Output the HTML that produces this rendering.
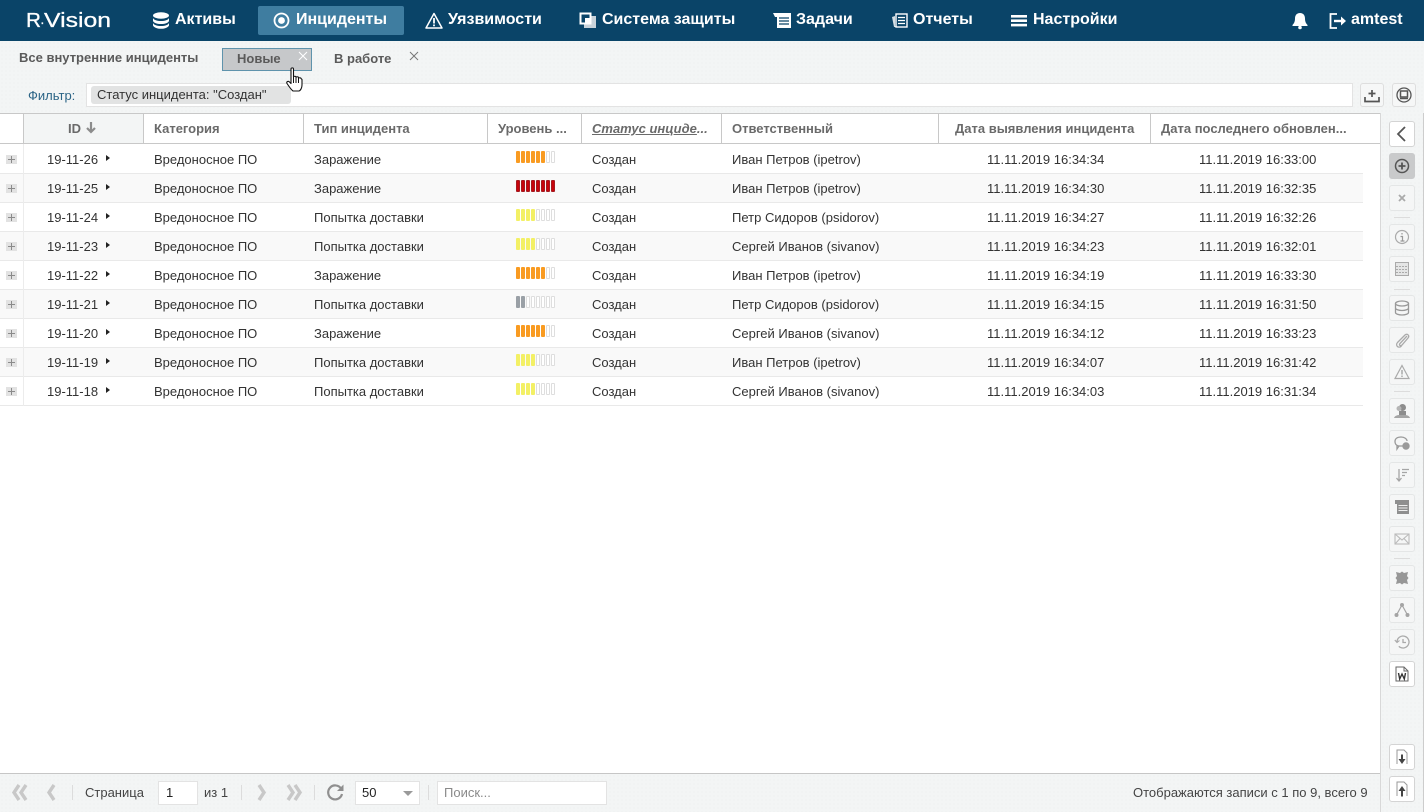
<!DOCTYPE html>
<html lang="ru"><head><meta charset="utf-8"><title>Инциденты</title>
<style>
*{box-sizing:border-box}
html,body{margin:0;padding:0;width:1424px;height:812px;overflow:hidden;background:#fff;font-family:"Liberation Sans",Arial,sans-serif;font-size:13px;color:#333}
.a{position:absolute;white-space:nowrap}
svg{position:absolute;overflow:visible}
#nav{position:absolute;left:0;top:0;width:1424px;height:41px;background:#0a4468}
#nav .t{position:absolute;top:0;line-height:40px;font-weight:bold;font-size:16px;color:#fff;white-space:nowrap}
#sub{position:absolute;left:0;top:41px;width:1424px;height:72px;background-color:#f3f5f5;background-image:radial-gradient(#eceeee 0.6px,transparent 0.7px);background-size:4px 4px}
.tab{position:absolute;font-weight:bold;font-size:13px;color:#5a5a5a;line-height:16px;white-space:nowrap}
.th{position:absolute;top:114px;height:29px;line-height:29px;font-weight:bold;font-size:13px;color:#6a6a6a;white-space:nowrap}
.vl{position:absolute;top:114px;height:29px;width:1px;background:#c8c8c8}
.r{position:absolute;left:0;width:1363px;height:29px;border-bottom:1px solid #e9e9e9;line-height:30px;white-space:nowrap}
.r.e{background:#f9f9f9}
.r span{position:absolute;top:0}
.r .x{left:6px;top:10px;width:11px;height:9px;background:#e2e2e2;color:#888}
.r .x:before{content:"";position:absolute;left:2px;top:4px;width:7px;height:1px;background:#8b8b8b}
.r .x:after{content:"";position:absolute;left:5px;top:1px;width:1px;height:7px;background:#8b8b8b}
.r .ar{left:106px;top:10px;width:0;height:0;border-left:4px solid #222;border-top:3px solid transparent;border-bottom:3px solid transparent}
.c1{left:47px}.c2{left:154px}.c3{left:314px}.c5{left:592px}.c6{left:732px}.c7{left:987px}.c8{left:1199px}
.r .lv{left:516px;top:6px;height:12px;width:40px;display:flex;gap:1px}
.lv i{display:block;flex:none;width:4px;height:12px;border-radius:1px;background:#fff;border:1px solid #dedede}
.lv i.o{background:#f99b21;border-color:#f99b21}
.lv i.d{background:#c8040c;border-color:#a51a20}
.lv i.y{background:#f3f065;border-color:#f3f065}
.lv i.g{background:#9aa0a6;border-color:#9aa0a6}
#side{position:absolute;left:1380px;top:113px;width:44px;height:699px;background-color:#f3f5f5;background-image:radial-gradient(#eceeee 0.6px,transparent 0.7px);background-size:4px 4px;border-left:1px solid #d8d8d8;border-right:1px solid #cdcdcd}
.b{position:absolute;left:1389px;width:26px;height:26px;border:1px solid #e4e6e6;border-radius:3px;background:#f5f6f6}
.b.w{background:#fff;border-color:#d4d4d4}
.b.on{background:#c9cacb;border-color:#c9cacb}
.b svg{left:4px;top:4px;width:16px;height:16px}
.dv{position:absolute;left:1394px;width:16px;height:1px;background:#dcdcdc}
#foot{position:absolute;left:0;top:773px;width:1380px;height:39px;background-color:#f3f5f5;background-image:radial-gradient(#eceeee 0.6px,transparent 0.7px);background-size:4px 4px;border-top:1px solid #c6c6c6}
.sp{position:absolute;top:785px;width:1px;height:15px;background:#dcdcdc}
.inp{position:absolute;top:781px;height:24px;background:#fff;border:1px solid #e3e3e3;line-height:22px;white-space:nowrap}
.ft{position:absolute;top:785px;line-height:15px;color:#444;white-space:nowrap}
</style></head><body>
<div id="nav">
<svg style="left:26px;top:10px" width="86" height="20" font-family="Liberation Sans" font-size="20" fill="#fff" stroke="#fff" stroke-width=".3"><text x="0" y="17" textLength="15" lengthAdjust="spacingAndGlyphs">R</text><text x="14" y="17" font-size="14">·</text><text x="18" y="17" textLength="67" lengthAdjust="spacingAndGlyphs">Vision</text></svg>
<svg style="left:152px;top:12px" width="18" height="17" fill="#fff"><ellipse cx="9" cy="3.500" rx="8" ry="3.200"/><path d="M1 6c1 2 4 3 8 3s7-1 8-3v3c-1 2-4 3-8 3S2 11 1 9z"/><path d="M1 11c1 2 4 3 8 3s7-1 8-3v2.500c-1 2-4 3.300-8 3.300S2 15.500 1 13.500z"/></svg>
<div class="t" style="left:175px">Активы</div>
<div style="position:absolute;left:258px;top:6px;width:146px;height:29px;background:#3f7da0;border-radius:2px"></div>
<svg style="left:273px;top:12px" width="17" height="17"><circle cx="8.500" cy="8.500" r="7" fill="none" stroke="#fff" stroke-width="1.800"/><circle cx="8.500" cy="8.500" r="3.400" fill="#fff"/></svg>
<div class="t" style="left:296px">Инциденты</div>
<svg style="left:425px;top:12px" width="18" height="17"><path d="M9 1.500 17 16H1z" fill="none" stroke="#fff" stroke-width="1.500" stroke-linejoin="round"/><path d="M9 6v5.500M9 12.500v1.800" stroke="#fff" stroke-width="1.800"/></svg>
<div class="t" style="left:448px">Уязвимости</div>
<svg style="left:579px;top:12px" width="18" height="17"><rect x="5" y="4" width="12" height="12" fill="#c9d3da"/><rect x="1.500" y="1.500" width="10" height="10" fill="#0a4468" stroke="#fff" stroke-width="2"/><rect x="6" y="6" width="5" height="5" fill="#fff"/></svg>
<div class="t" style="left:602px">Система защиты</div>
<svg style="left:773px;top:12px" width="18" height="17"><path d="M0 1h18v15H4V5H2z" fill="#fff"/><path d="M6 6h10M6 9h10M6 12h10" stroke="#0a4468" stroke-width="1.200"/></svg>
<div class="t" style="left:796px">Задачи</div>
<svg style="left:891px;top:13px" width="17" height="15"><path d="M1 4l3-1v10l3 1H3z" fill="#d6dfe4"/><rect x="5" y="1" width="11" height="13" fill="none" stroke="#fff" stroke-width="1.400"/><path d="M7 4.500h7M7 7.500h7M7 10.500h7" stroke="#fff" stroke-width="1.300"/></svg>
<div class="t" style="left:913px">Отчеты</div>
<svg style="left:1011px;top:15px" width="16" height="12" fill="#fff"><rect width="16" height="2.600"/><rect y="4.400" width="16" height="2.600"/><rect y="8.800" width="16" height="2.600"/></svg>
<div class="t" style="left:1033px">Настройки</div>
<svg style="left:1291px;top:12px" width="18" height="17" fill="#fff"><path d="M9 1c3.500 0 5 2.500 5 5.500 0 3 1 5 2.500 6.500v1h-15v-1C3 11.500 4 9.500 4 6.500 4 3.500 5.500 1 9 1z"/><circle cx="9" cy="15.500" r="1.800"/></svg>
<svg style="left:1329px;top:12px" width="18" height="17" fill="none" stroke="#fff" stroke-width="1.800"><path d="M8 2H1.500v14H8"/><path d="M5 9h8" stroke-width="2.400"/><path d="M12 4.500 17 9l-5 4.500z" fill="#fff" stroke="none"/></svg>
<div class="t" style="left:1351px">amtest</div>
</div>

<div id="sub"></div>
<div class="tab" style="left:19px;top:50px">Все внутренние инциденты</div>
<div style="position:absolute;left:222px;top:48px;width:90px;height:23px;background:#c6c8ca;border:1px solid #5f93ac"></div>
<div class="tab" style="left:237px;top:51px">Новые</div>
<svg style="left:298px;top:51px" width="10" height="10" stroke="#fff" stroke-width="1"><path d="M1 1l8 8M9 1 1 9"/></svg>
<div class="tab" style="left:334px;top:51px">В работе</div>
<svg style="left:409px;top:51px" width="10" height="10" stroke="#777" stroke-width="1"><path d="M1 1l8 8M9 1 1 9"/></svg>

<div class="a" style="left:28px;top:88px;line-height:15px;color:#2b6486">Фильтр:</div>
<div style="position:absolute;left:86px;top:83px;width:1267px;height:24px;background:#fff;border:1px solid #e3e3e3"></div>
<div class="a" style="left:91px;top:86px;width:200px;height:18px;background:#e2e3e3;border-radius:3px;line-height:17px;padding-left:6px;color:#333">Статус инцидента: "Создан"</div>
<div style="position:absolute;left:1360px;top:83px;width:24px;height:24px;border:1px solid #dedede;border-radius:3px;background:#f6f7f7"></div>
<svg style="left:1364px;top:89px" width="16" height="14" fill="none" stroke="#555" stroke-width="1.700"><path d="M8 1v7M4.500 4.500h7"/><path d="M1 8v4.500h14V8"/></svg>
<div style="position:absolute;left:1392px;top:83px;width:24px;height:24px;border:1px solid #dedede;border-radius:3px;background:#f6f7f7"></div>
<svg style="left:1396px;top:87px" width="16" height="16" fill="none" stroke="#555"><circle cx="8" cy="8" r="7" stroke-width="1.300"/><rect x="4.500" y="4" width="7" height="6" stroke-width="1.500"/><path d="M4 11.500h8" stroke-width="1.500"/></svg>

<!-- table header -->
<div style="position:absolute;left:0;top:113px;width:1380px;height:31px;background:#fff;border-top:1px solid #c8c8c8;border-bottom:1px solid #c8c8c8"></div>
<div style="position:absolute;left:24px;top:114px;width:119px;height:29px;background:#f3f5f5"></div>
<div class="vl" style="left:23px"></div><div class="vl" style="left:143px"></div><div class="vl" style="left:303px"></div><div class="vl" style="left:487px"></div><div class="vl" style="left:581px"></div><div class="vl" style="left:721px"></div><div class="vl" style="left:938px"></div><div class="vl" style="left:1150px"></div>
<div class="th" style="left:68px">ID</div>
<svg style="left:86px;top:122px" width="10" height="12" fill="none" stroke="#8c8c8c" stroke-width="2.200"><path d="M5 0v10M1 6l4 4 4-4"/></svg>
<div class="th" style="left:154px">Категория</div>
<div class="th" style="left:314px">Тип инцидента</div>
<div class="th" style="left:498px">Уровень ...</div>
<div class="th" style="left:592px;font-style:italic"><u>Статус инциде</u>...</div>
<div class="th" style="left:732px">Ответственный</div>
<div class="th" style="left:955px">Дата выявления инцидента</div>
<div class="th" style="left:1161px">Дата последнего обновлен...</div>

<!-- rows -->
<div class="r" style="top:145px"><span class="x"></span><span class="c1">19-11-26</span><span class="ar"></span><span class="c2">Вредоносное ПО</span><span class="c3">Заражение</span><span class="lv"><i class="o"></i><i class="o"></i><i class="o"></i><i class="o"></i><i class="o"></i><i class="o"></i><i></i><i></i></span><span class="c5">Создан</span><span class="c6">Иван Петров (ipetrov)</span><span class="c7">11.11.2019 16:34:34</span><span class="c8">11.11.2019 16:33:00</span></div>
<div class="r e" style="top:174px"><span class="x"></span><span class="c1">19-11-25</span><span class="ar"></span><span class="c2">Вредоносное ПО</span><span class="c3">Заражение</span><span class="lv"><i class="d"></i><i class="d"></i><i class="d"></i><i class="d"></i><i class="d"></i><i class="d"></i><i class="d"></i><i class="d"></i></span><span class="c5">Создан</span><span class="c6">Иван Петров (ipetrov)</span><span class="c7">11.11.2019 16:34:30</span><span class="c8">11.11.2019 16:32:35</span></div>
<div class="r" style="top:203px"><span class="x"></span><span class="c1">19-11-24</span><span class="ar"></span><span class="c2">Вредоносное ПО</span><span class="c3">Попытка доставки</span><span class="lv"><i class="y"></i><i class="y"></i><i class="y"></i><i class="y"></i><i></i><i></i><i></i><i></i></span><span class="c5">Создан</span><span class="c6">Петр Сидоров (psidorov)</span><span class="c7">11.11.2019 16:34:27</span><span class="c8">11.11.2019 16:32:26</span></div>
<div class="r e" style="top:232px"><span class="x"></span><span class="c1">19-11-23</span><span class="ar"></span><span class="c2">Вредоносное ПО</span><span class="c3">Попытка доставки</span><span class="lv"><i class="y"></i><i class="y"></i><i class="y"></i><i class="y"></i><i></i><i></i><i></i><i></i></span><span class="c5">Создан</span><span class="c6">Сергей Иванов (sivanov)</span><span class="c7">11.11.2019 16:34:23</span><span class="c8">11.11.2019 16:32:01</span></div>
<div class="r" style="top:261px"><span class="x"></span><span class="c1">19-11-22</span><span class="ar"></span><span class="c2">Вредоносное ПО</span><span class="c3">Заражение</span><span class="lv"><i class="o"></i><i class="o"></i><i class="o"></i><i class="o"></i><i class="o"></i><i class="o"></i><i></i><i></i></span><span class="c5">Создан</span><span class="c6">Иван Петров (ipetrov)</span><span class="c7">11.11.2019 16:34:19</span><span class="c8">11.11.2019 16:33:30</span></div>
<div class="r e" style="top:290px"><span class="x"></span><span class="c1">19-11-21</span><span class="ar"></span><span class="c2">Вредоносное ПО</span><span class="c3">Попытка доставки</span><span class="lv"><i class="g"></i><i class="g"></i><i></i><i></i><i></i><i></i><i></i><i></i></span><span class="c5">Создан</span><span class="c6">Петр Сидоров (psidorov)</span><span class="c7">11.11.2019 16:34:15</span><span class="c8">11.11.2019 16:31:50</span></div>
<div class="r" style="top:319px"><span class="x"></span><span class="c1">19-11-20</span><span class="ar"></span><span class="c2">Вредоносное ПО</span><span class="c3">Заражение</span><span class="lv"><i class="o"></i><i class="o"></i><i class="o"></i><i class="o"></i><i class="o"></i><i class="o"></i><i></i><i></i></span><span class="c5">Создан</span><span class="c6">Сергей Иванов (sivanov)</span><span class="c7">11.11.2019 16:34:12</span><span class="c8">11.11.2019 16:33:23</span></div>
<div class="r e" style="top:348px"><span class="x"></span><span class="c1">19-11-19</span><span class="ar"></span><span class="c2">Вредоносное ПО</span><span class="c3">Попытка доставки</span><span class="lv"><i class="y"></i><i class="y"></i><i class="y"></i><i class="y"></i><i></i><i></i><i></i><i></i></span><span class="c5">Создан</span><span class="c6">Иван Петров (ipetrov)</span><span class="c7">11.11.2019 16:34:07</span><span class="c8">11.11.2019 16:31:42</span></div>
<div class="r" style="top:377px"><span class="x"></span><span class="c1">19-11-18</span><span class="ar"></span><span class="c2">Вредоносное ПО</span><span class="c3">Попытка доставки</span><span class="lv"><i class="y"></i><i class="y"></i><i class="y"></i><i class="y"></i><i></i><i></i><i></i><i></i></span><span class="c5">Создан</span><span class="c6">Сергей Иванов (sivanov)</span><span class="c7">11.11.2019 16:34:03</span><span class="c8">11.11.2019 16:31:34</span></div>
<div style="position:absolute;left:23px;top:144px;width:1px;height:262px;background:#ececec"></div>

<!-- side toolbar -->
<div id="side"></div>
<div class="b w" style="top:121px"><svg viewBox="0 0 16 16" fill="none" stroke="#555" stroke-width="1.800"><path d="M11 1 4 8l7 7"/></svg></div>
<div class="b on" style="top:153px"><svg viewBox="0 0 16 16" fill="none" stroke="#555" stroke-width="1.500"><circle cx="8" cy="8" r="6.500"/><path d="M8 4.500v7M4.500 8h7" stroke-width="1.800"/></svg></div>
<div class="b" style="top:185px"><svg viewBox="0 0 16 16" fill="none" stroke="#aaa" stroke-width="1.800"><path d="M5 5l6 6M11 5l-6 6"/></svg></div>
<div class="dv" style="top:217px"></div>
<div class="b" style="top:224px"><svg viewBox="0 0 16 16" fill="none" stroke="#aaa" stroke-width="1.200"><circle cx="8" cy="8" r="6.500"/><path d="M8 4v1.500M6.500 7.500H8.500V12M6.500 12h4" stroke="#999"/></svg></div>
<div class="b" style="top:256px"><svg viewBox="0 0 16 16" fill="none" stroke="#aaa" stroke-width="1"><rect x="1.500" y="1.500" width="13" height="13" fill="#e4e5e5"/><path d="M2 5.500h12M2 8.500h12M2 11.500h12" stroke-dasharray="2 1"/></svg></div>
<div class="dv" style="top:289px"></div>
<div class="b" style="top:295px"><svg viewBox="0 0 16 16" fill="none" stroke="#999" stroke-width="1.300"><ellipse cx="8" cy="3.500" rx="6.500" ry="2.500"/><path d="M1.500 3.500v9c0 1.400 3 2.500 6.500 2.500s6.500-1.100 6.500-2.500v-9M1.500 8c0 1.400 3 2.500 6.500 2.500s6.500-1.100 6.500-2.500"/></svg></div>
<div class="b" style="top:327px"><svg viewBox="0 0 16 16" fill="none" stroke="#aaa" stroke-width="1.300"><path d="M13 4 6 11.500c-1.500 1.500 .5 3 2 1.500l6-7c2-2.500-1-5-3-3L3.500 10.500c-2.500 3 1 6.500 4 3.500"/></svg></div>
<div class="b" style="top:359px"><svg viewBox="0 0 16 16" fill="none" stroke="#aaa" stroke-width="1.200"><path d="M8 1.500 15 14.500H1z"/><path d="M8 6v4.500M8 11.500v1.500" stroke-width="1.500"/></svg></div>
<div class="dv" style="top:391px"></div>
<div class="b" style="top:398px"><svg viewBox="0 0 16 16" fill="#8d8d8d"><circle cx="8.500" cy="4.500" r="3.500"/><path d="M5 8h7v4H5z"/><path d="M0 15c.5-2 3-3 5-3h6c2 0 4.500 1 5 3z" fill="#a5a5a5"/><circle cx="5" cy="5.500" r="2.500" fill="#b5b5b5"/></svg></div>
<div class="b" style="top:430px"><svg viewBox="0 0 16 16" fill="none" stroke="#999" stroke-width="1.300"><path d="M9 11H6c-3 0-5-1.500-5-4.500S3.500 2 7 2s6 2 6 4M5 11l-2 3v-3.500"/><circle cx="12" cy="11" r="3.700" fill="#9a9a9a" stroke="none"/></svg></div>
<div class="b" style="top:462px"><svg viewBox="0 0 16 16" fill="none" stroke="#a5a5a5" stroke-width="1.300"><path d="M5 2v12M2.500 11 5 14l2.500-3M8 2.500h7M8 5.500h5M8 8.500h3"/></svg></div>
<div class="b" style="top:494px"><svg viewBox="0 0 16 16" fill="#8f8f8f"><path d="M1 1h14v14H3V5H1z"/><path d="M4.500 6.500h9M4.500 9h9M4.500 11.500h9" stroke="#eee" stroke-width="1"/></svg></div>
<div class="b" style="top:526px"><svg viewBox="0 0 16 16" fill="none" stroke="#bbb" stroke-width="1.100"><rect x="1" y="3" width="14" height="10"/><path d="M1 3l7 6 7-6M1 13l5-5.500M15 13l-5-5.500"/></svg></div>
<div class="dv" style="top:558px"></div>
<div class="b" style="top:565px"><svg viewBox="0 0 16 16" fill="#979797"><path d="M2 2l4 1 2-1.500L10 3l4-1-1 4 1.500 2L13 10l1 4-4-1-2 1.500L6 13l-4 1 1-4L1.500 8 3 6z"/></svg></div>
<div class="b" style="top:597px"><svg viewBox="0 0 16 16" fill="#a5a5a5" stroke="#a5a5a5"><path d="M8 3 2.500 13M8 3l5.500 10" fill="none" stroke-width="1.200"/><circle cx="8" cy="3" r="1.500"/><circle cx="2.500" cy="13" r="1.500"/><circle cx="13.500" cy="13" r="1.500"/></svg></div>
<div class="b" style="top:629px"><svg viewBox="0 0 16 16" fill="none" stroke="#aaa" stroke-width="1.300"><path d="M3 8a6 6 0 1 1 1.800 4.300"/><path d="M.8 6 3 8.500 5.500 6.500" stroke-width="1.100"/><path d="M9 5v3.500h3"/></svg></div>
<div class="b w" style="top:661px"><svg viewBox="0 0 16 16" fill="none" stroke="#666" stroke-width="1"><path d="M2 1h8l4 4v10H2z"/><path d="M10 1v4h4"/><path d="M4.500 7l1.200 6 2.300-5 2.300 5 1.200-6" stroke="#333" stroke-width="1.400"/></svg></div>
<div class="b w" style="top:744px"><svg viewBox="0 0 16 16" fill="none" stroke="#999" stroke-width="1"><path d="M3 15V1h7l3 3v11"/><path d="M8 5.500v6" stroke="#444" stroke-width="2"/><path d="M4.500 10h7L8 15z" fill="#444" stroke="none"/></svg></div>
<div class="b w" style="top:776px"><svg viewBox="0 0 16 16" fill="none" stroke="#999" stroke-width="1"><path d="M3 15V1h7l3 3v11"/><path d="M8 9.500v6" stroke="#444" stroke-width="2"/><path d="M4.500 10h7L8 5z" fill="#444" stroke="none"/></svg></div>

<!-- footer -->
<div id="foot"></div>
<svg style="left:11px;top:784px" width="18" height="17" fill="none" stroke="#c8c8c8" stroke-width="3.400"><path d="M8 1 3 8.500 8 16M15 1 10 8.500l5 7.500"/></svg>
<svg style="left:47px;top:784px" width="10" height="17" fill="none" stroke="#c8c8c8" stroke-width="3.400"><path d="M7 1 2 8.500 7 16"/></svg>
<div class="sp" style="left:72px"></div>
<div class="ft" style="left:85px">Страница</div>
<div class="inp" style="left:158px;width:40px;padding-left:7px;color:#222">1</div>
<div class="ft" style="left:204px">из 1</div>
<div class="sp" style="left:241px"></div>
<svg style="left:256px;top:784px" width="10" height="17" fill="none" stroke="#c8c8c8" stroke-width="3.400"><path d="M3 1l5 7.500L3 16"/></svg>
<svg style="left:285px;top:784px" width="18" height="17" fill="none" stroke="#c8c8c8" stroke-width="3.400"><path d="M3 1l5 7.500L3 16M10 1l5 7.500L10 16"/></svg>
<div class="sp" style="left:314px"></div>
<svg style="left:327px;top:784px" width="17" height="17" fill="none" stroke="#8f8f8f" stroke-width="2.200"><path d="M14 4.500A7 7 0 1 0 15 10"/><path d="M16.500 .5v6.500h-6.500z" fill="#8f8f8f" stroke="none"/></svg>
<div class="inp" style="left:355px;width:65px;padding-left:6px;color:#222">50</div>
<div class="a" style="left:403px;top:791px;width:0;height:0;border-top:5px solid #9a9a9a;border-left:5px solid transparent;border-right:5px solid transparent"></div>
<div class="sp" style="left:428px"></div>
<div class="inp" style="left:437px;width:170px;padding-left:6px;color:#8a8a8a">Поиск...</div>
<div class="ft" style="left:1133px">Отображаются записи с 1 по 9, всего 9</div>

<!-- cursor -->
<svg style="left:286px;top:67px" width="20" height="25" viewBox="0 0 20 25"><path d="M5 2c0-1.500 2.500-1.500 2.500 0v8c0-1 2.500-1 2.500 0v.5c0-1 2.500-1 2.500 0v1c0-1 2.500-1 2.500 0l1 1V18c0 3-1.500 5.500-3 6H7c-1.500-1-5-6-6-7.500s1-3 2.500-1.500L5 16.500z" fill="#fff" stroke="#111" stroke-width="1.100" stroke-linejoin="round"/><path d="M7.500 10v6M10 10.500v5.500M12.500 11.500v4.500" stroke="#111" stroke-width="1"/></svg>
</body></html>
